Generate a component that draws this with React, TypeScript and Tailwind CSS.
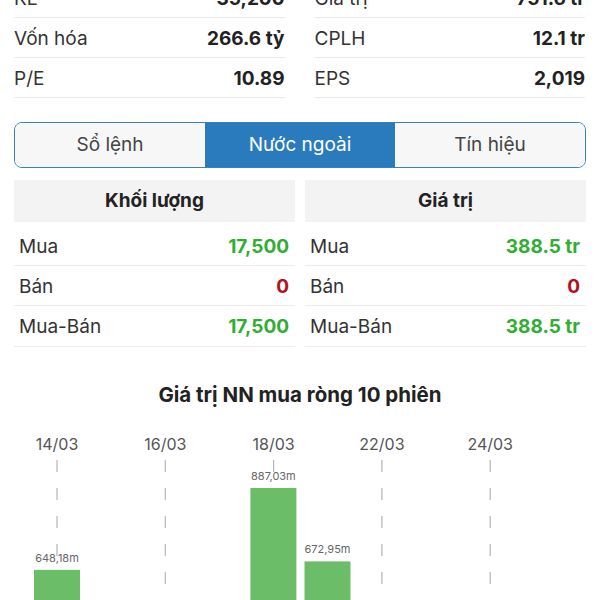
import React from "react";

const font = { fontFamily: "Inter, 'Noto Sans', sans-serif" };

const stats = [
    [
        { label: "KL", value: "35,200" },
        { label: "Giá trị", value: "751.6 tr" },
    ],
    [
        { label: "Vốn hóa", value: "266.6 tỷ" },
        { label: "CPLH", value: "12.1 tr" },
    ],
    [
        { label: "P/E", value: "10.89" },
        { label: "EPS", value: "2,019" },
    ],
];

const tabs = ["Sổ lệnh", "Nước ngoài", "Tín hiệu"];

interface FlowRow {
    label: string;
    value: string;
    color: string;
}

const volumeRows: FlowRow[] = [
    { label: "Mua", value: "17,500", color: "text-[#2fae32]" },
    { label: "Bán", value: "0", color: "text-[#b3121c]" },
    { label: "Mua-Bán", value: "17,500", color: "text-[#2fae32]" },
];

const valueRows: FlowRow[] = [
    { label: "Mua", value: "388.5 tr", color: "text-[#2fae32]" },
    { label: "Bán", value: "0", color: "text-[#b3121c]" },
    { label: "Mua-Bán", value: "388.5 tr", color: "text-[#2fae32]" },
];

// 10 sessions, 54px apart, first center at x=57
const dates = ["14/03", "16/03", "18/03", "22/03", "24/03"];
const bars = [
    { idx: 0, value: 648.18, label: "648,18m" },
    { idx: 4, value: 887.03, label: "887,03m" },
    { idx: 5, value: 672.95, label: "672,95m" },
];
const BASE = 372;
const SCALE = 0.3427;

function FlowTable({ title, rows }: { title: string; rows: FlowRow[] }) {
    return (
        <div className="flex-1 min-w-0">
            <div className="h-[42px] bg-[#f3f3f3] flex items-center justify-center text-[19px] font-bold text-[#222]">
                {title}
            </div>
            <div className="pt-1">
                {rows.map((r, i) => (
                    <div
                        key={r.label}
                        className={
                            i === 2
                                ? "h-[41px] pt-[3px] border-b border-[#ececec] flex items-center justify-between pl-[5px] pr-[6px] text-[19px]"
                                : "h-10 pt-[3px] border-b border-[#ececec] flex items-center justify-between pl-[5px] pr-[6px] text-[19px]"
                        }
                    >
                        <span className="text-[#333]">{r.label}</span>
                        <span className={`font-bold ${r.color}`}>{r.value}</span>
                    </div>
                ))}
            </div>
        </div>
    );
}

export default function App() {
    return (
        <div className="w-[600px] h-[600px] overflow-hidden bg-white" style={font}>
            {/* Stats */}
            <div className="-mt-[22px] pl-[14px] pr-[15px]">
                {stats.map((row, i) => (
                    <div key={i} className="flex gap-[30px]">
                        {row.map((s) => (
                            <div key={s.label} className="flex-1 h-10 pt-[3px] border-b border-[#ececec] flex items-center justify-between text-[19px]">
                                <span className="text-[#333]">{s.label}</span>
                                <span className="font-bold text-[#222]">{s.value}</span>
                            </div>
                        ))}
                    </div>
                ))}
            </div>

            {/* Tabs */}
            <div className="mx-[14px] mt-[24px] h-[46px] flex rounded-[8px] border-[1.5px] border-[#3b80b9] overflow-hidden">
                {tabs.map((t, i) => (
                    <div
                        key={t}
                        className={
                            i === 1
                                ? "flex-1 flex items-center justify-center bg-[#2a7bbd] text-white text-[19px]"
                                : "flex-1 flex items-center justify-center bg-[#f7f7f7] text-[#444] text-[19px]"
                        }
                    >
                        {t}
                    </div>
                ))}
            </div>

            {/* Foreign flow tables */}
            <div className="mx-[14px] mt-[12px] flex gap-[10px]">
                <FlowTable title="Khối lượng" rows={volumeRows} />
                <FlowTable title="Giá trị" rows={valueRows} />
            </div>

            {/* Chart */}
            <div className="mt-[34px] text-center text-[20.5px] leading-7 font-bold text-[#222]">
                Giá trị NN mua ròng 10 phiên
            </div>
            <svg width="600" height="200" className="mt-[11px] block">
                {dates.map((d, i) => {
                    const x = 57 + i * 108.3;
                    return (
                        <g key={d}>
                            <line x1={x} y1={40} x2={x} y2={200} stroke="#b5b5b5" strokeWidth={1.2} strokeDasharray="12 16" />
                            <text x={x} y={30} textAnchor="middle" fontSize={16} fill="#555" fontFamily="Inter, sans-serif">
                                {d}
                            </text>
                        </g>
                    );
                })}
                {bars.map((b) => {
                    const cx = 57 + b.idx * 54.1;
                    const top = BASE - b.value * SCALE;
                    return (
                        <g key={b.label}>
                            <rect x={cx - 23} y={top} width={46} height={BASE - top} fill="#6cbd68" />
                            <text x={cx} y={top - 8} textAnchor="middle" fontSize={11} fill="#666" fontFamily="Inter, sans-serif">
                                {b.label}
                            </text>
                        </g>
                    );
                })}
            </svg>
        </div>
    );
}
